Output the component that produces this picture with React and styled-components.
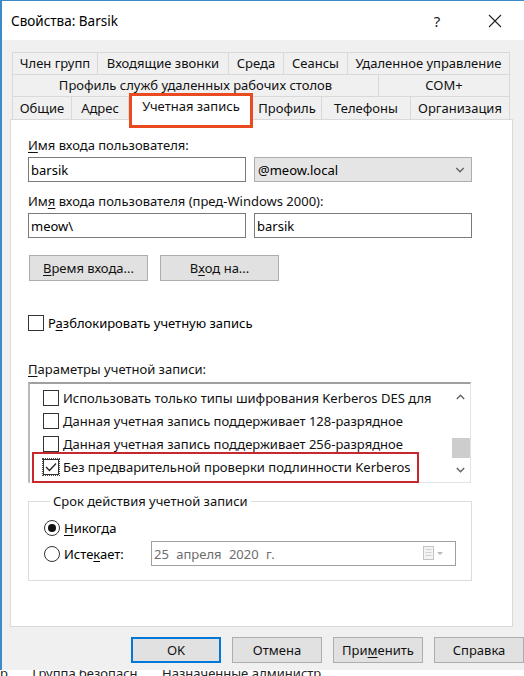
import React from "react";
import styled, { createGlobalStyle } from "styled-components";

const GlobalStyle = createGlobalStyle`
  html, body {
    margin: 0;
    padding: 0;
    background: #fff;
  }
  body {
    font-family: "Noto Sans", "Open Sans", sans-serif;
    font-size: 13px;
    color: #000;
  }
  u {
    text-underline-offset: 2px;
  }
`;

const Window = styled.div`
  width: 524px;
  height: 670px;
  box-sizing: border-box;
  background: #f0f0f0;
  border-left: 2px solid #3d8ac6;
  border-top: 1px solid #3d8ac6;
  display: flex;
  flex-direction: column;
`;

const TitleBar = styled.div`
  height: 39px;
  background: #fff;
  display: flex;
  align-items: center;
  padding-left: 9px;
`;

const Title = styled.div`
  flex: 1;
  font-size: 13.5px;
`;

const CaptionButton = styled.div`
  width: 58px;
  height: 39px;
  display: flex;
  align-items: center;
  justify-content: center;
  font-size: 15px;
  color: #222;
`;

const Body = styled.div`
  padding: 12px 0 0 8px;
`;

const Tabs = styled.div`
  margin: 0 2px;
  width: 498px;
  position: relative;
  z-index: 1;
`;

const TabRow = styled.div`
  display: flex;
  align-items: flex-end;
  height: ${(p) => p.$h}px;
`;

const Tab = styled.div`
  box-sizing: border-box;
  flex: 0 0 ${(p) => p.$w}px;
  height: ${(p) => (p.$active ? 26 : p.$h)}px;
  margin-bottom: ${(p) => (p.$active ? -1 : 0)}px;
  display: flex;
  align-items: center;
  justify-content: center;
  padding-bottom: ${(p) => (p.$active ? 4 : 1)}px;
  white-space: nowrap;
  background: ${(p) => (p.$active ? "#fff" : "#f0f0f0")};
  border-top: 1px solid #d9d9d9;
  border-right: 1px solid #d9d9d9;
  border-left: ${(p) => (p.$first || p.$active ? "1px solid #d9d9d9" : "none")};
  color: #111;
  position: relative;
  z-index: ${(p) => (p.$active ? 2 : 0)};

  ${(p) =>
    p.$active &&
    `
    &::after {
      content: "";
      position: absolute;
      left: -1px;
      right: -1px;
      top: -2px;
      bottom: -8px;
      border: 3px solid #ea4a1f;
    }
  `}
`;

const Panel = styled.div`
  box-sizing: border-box;
  width: 503px;
  height: 508px;
  background: #fff;
  border: 1px solid #d9d9d9;
  padding: 17px 0 0 17px;
`;

const Label = styled.div`
  line-height: 16px;
  height: 16px;
  margin-top: ${(p) => p.$mt || 0}px;
  color: #111;
  white-space: nowrap;
`;

const FieldRow = styled.div`
  display: flex;
  gap: 8px;
  margin-top: 4px;
`;

const TextBox = styled.div`
  box-sizing: border-box;
  width: 218px;
  height: 25px;
  border: 1px solid #7a7a7a;
  background: #fff;
  padding-left: 2px;
  display: flex;
  align-items: center;
`;

const Combo = styled.div`
  box-sizing: border-box;
  width: 218px;
  height: 25px;
  border: 1px solid #adadad;
  background: #e5e5e5;
  padding: 0 6px 0 3px;
  display: flex;
  align-items: center;
  justify-content: space-between;
`;

const ButtonRow = styled.div`
  display: flex;
  gap: ${(p) => p.$gap}px;
  margin-top: ${(p) => p.$mt}px;
  margin-left: ${(p) => p.$ml || 0}px;
  justify-content: ${(p) => p.$end ? "flex-end" : "flex-start"};
`;

const Button = styled.div`
  box-sizing: border-box;
  width: ${(p) => p.$w}px;
  height: 26px;
  background: #e1e1e1;
  border: ${(p) => (p.$default ? "2px solid #0078d7" : "1px solid #adadad")};
  display: flex;
  align-items: center;
  justify-content: center;
  color: #111;
`;

const CheckRow = styled.div`
  display: flex;
  align-items: center;
  gap: ${(p) => p.$gap || 4}px;
  height: 16px;
  margin-top: ${(p) => p.$mt || 0}px;
  white-space: nowrap;
`;

const Box = styled.div`
  box-sizing: border-box;
  width: 16px;
  height: 16px;
  flex: 0 0 16px;
  border: 1px solid #333;
  background: #fff;
  display: flex;
  align-items: center;
  justify-content: center;
  position: relative;

  ${(p) =>
    p.$focus &&
    `
    &::after {
      content: "";
      position: absolute;
      inset: -2px;
      border: 1px dotted #444;
    }
  `}
`;

const ListBox = styled.div`
  box-sizing: border-box;
  width: 443px;
  height: 101px;
  margin-top: 5px;
  border-top: 2px solid #a0a0a0;
  border-left: 2px solid #b9b9b9;
  border-right: 1px solid #e3e3e3;
  border-bottom: 1px solid #e3e3e3;
  display: flex;
  background: #fff;
`;

const ListItems = styled.div`
  flex: 1;
  padding-top: 2px;
  position: relative;
`;

const ListItem = styled.div`
  height: 23px;
  display: flex;
  align-items: center;
  gap: 4px;
  padding-left: 13px;
  white-space: nowrap;
  overflow: visible;
  position: relative;
  color: #111;

  ${(p) =>
    p.$marked &&
    `
    &::after {
      content: "";
      position: absolute;
      left: 2px;
      width: 383px;
      top: -3px;
      bottom: -5px;
      border: 2px solid #c7282e;
    }
  `}
`;

const ScrollBar = styled.div`
  width: 19px;
  display: flex;
  flex-direction: column;
  background: #fff;
`;

const ArrowCell = styled.div`
  height: ${(p) => p.$h}px;
  display: flex;
  align-items: ${(p) => (p.$up ? "center" : "flex-start")};
  justify-content: center;
  padding-top: ${(p) => p.$pt || 0}px;
  box-sizing: border-box;
`;

const Track = styled.div`
  flex: 1;
  position: relative;
`;

const Thumb = styled.div`
  margin-top: ${(p) => p.$top}px;
  margin-left: 1px;
  width: 18px;
  height: 20px;
  background: #cdcdcd;
`;

const GroupBox = styled.fieldset`
  box-sizing: border-box;
  width: 444px;
  margin: 10px 0 0 0;
  padding: 0 15px 14px 15px;
  border: 1px solid #dcdcdc;
  min-width: 0;
`;

const Legend = styled.legend`
  padding: 0 3px;
  margin-left: 6px;
  line-height: 16px;
  color: #111;
`;

const RadioRow = styled.div`
  display: flex;
  align-items: center;
  height: ${(p) => p.$h}px;
  margin-top: ${(p) => p.$mt}px;
  white-space: nowrap;
`;

const Radio = styled.div`
  box-sizing: border-box;
  width: 16px;
  height: 16px;
  border-radius: 50%;
  border: 1px solid #333;
  background: #fff;
  margin-right: 4px;
  display: flex;
  align-items: center;
  justify-content: center;

  &::after {
    content: "";
    width: 8px;
    height: 8px;
    border-radius: 50%;
    background: ${(p) => (p.$checked ? "#111" : "transparent")};
  }
`;

const DatePicker = styled.div`
  box-sizing: border-box;
  width: 305px;
  height: 25px;
  margin-left: auto;
  border: 1px solid #a0a0a0;
  background: #fff;
  display: flex;
  align-items: center;
  padding: 0 10px 0 2px;
  color: #6d6d6d;
`;

const DateText = styled.span`
  flex: 1;
  word-spacing: 4px;
`;

const Footer = styled.div`
  height: 6px;
  overflow: hidden;
  background: #fff;
`;

const FooterText = styled.div`
  margin-top: -5px;
  line-height: 16px;
  display: flex;
  gap: 14px;
  white-space: nowrap;
  color: #222;
  font-size: 13px;
`;

const Chevron = ({ up, color = "#606060", w = 9 }) => (
  <svg width={w} height="6" viewBox="0 0 9 6">
    <polyline
      points={up ? "0.8,5 4.5,1.2 8.2,5" : "0.8,1 4.5,4.8 8.2,1"}
      fill="none"
      stroke={color}
      strokeWidth="1.3"
    />
  </svg>
);

const CheckMark = () => (
  <svg width="12" height="10" viewBox="0 0 12 10">
    <polyline points="1,5 4.5,8.5 11,1.5" fill="none" stroke="#222" strokeWidth="1.3" />
  </svg>
);

const CalendarIcon = () => (
  <svg width="22" height="16" viewBox="0 0 22 16">
    <rect x="0.5" y="0.5" width="10" height="13" fill="#f4f4f4" stroke="#c4c4c4" />
    <rect x="2.5" y="3" width="6" height="1" fill="#d0d0d0" />
    <rect x="2.5" y="6" width="6" height="1" fill="#d0d0d0" />
    <rect x="2.5" y="9" width="6" height="1" fill="#d0d0d0" />
    <polygon points="14,6 20,6 17,9" fill="#b8b8b8" />
  </svg>
);

const tabRows = [
  {
    h: 22,
    tabs: [
      ["Член групп", 86],
      ["Входящие звонки", 131],
      ["Среда", 55],
      ["Сеансы", 64],
      ["Удаленное управление", 162],
    ],
  },
  {
    h: 22,
    tabs: [
      ["Профиль служб удаленных рабочих столов", 367],
      ["COM+", 131],
    ],
  },
  {
    h: 23,
    tabs: [
      ["Общие", 60],
      ["Адрес", 57],
      ["Учетная запись", 124, true],
      ["Профиль", 69],
      ["Телефоны", 89],
      ["Организация", 99],
    ],
  },
];

const options = [
  { text: "Использовать только типы шифрования Kerberos DES для" },
  { text: "Данная учетная запись поддерживает 128-разрядное" },
  { text: "Данная учетная запись поддерживает 256-разрядное" },
  { text: "Без предварительной проверки подлинности Kerberos", checked: true },
];

export default function App() {
  return (
    <>
      <GlobalStyle />
      <Window>
        <TitleBar>
          <Title>Свойства: Barsik</Title>
          <CaptionButton>?</CaptionButton>
          <CaptionButton>
            <svg width="14" height="14" viewBox="0 0 14 14">
              <path d="M1 1 L13 13 M13 1 L1 13" stroke="#222" strokeWidth="1.1" />
            </svg>
          </CaptionButton>
        </TitleBar>

        <Body>
          <Tabs>
            {tabRows.map((row, i) => (
              <TabRow key={i} $h={row.h}>
                {row.tabs.map(([name, w, active], j) => (
                  <Tab key={name} $w={w} $h={row.h} $active={active} $first={j === 0}>
                    {name}
                  </Tab>
                ))}
              </TabRow>
            ))}
          </Tabs>

          <Panel>
            <Label>
              <u>И</u>мя входа пользователя:
            </Label>
            <FieldRow>
              <TextBox>barsik</TextBox>
              <Combo>
                <span>@meow.local</span>
                <Chevron w={10} />
              </Combo>
            </FieldRow>

            <Label $mt={11}>
              Им<u>я</u> входа пользователя (пред-Windows 2000):
            </Label>
            <FieldRow>
              <TextBox>meow\</TextBox>
              <TextBox>barsik</TextBox>
            </FieldRow>

            <ButtonRow $gap={12} $mt={17} $ml={1}>
              <Button $w={119}>
                <u>В</u>ремя входа...
              </Button>
              <Button $w={119}>
                В<u>х</u>од на...
              </Button>
            </ButtonRow>

            <CheckRow $mt={34}>
              <Box />
              <span>
                Р<u>а</u>зблокировать учетную запись
              </span>
            </CheckRow>

            <Label $mt={30}>
              <u>П</u>араметры учетной записи:
            </Label>
            <ListBox>
              <ListItems>
                {options.map((o, i) => (
                  <ListItem key={i} $marked={o.checked}>
                    <Box $focus={o.checked}>{o.checked && <CheckMark />}</Box>
                    <span>{o.text}</span>
                  </ListItem>
                ))}
              </ListItems>
              <ScrollBar>
                <ArrowCell $h={26} $up>
                  <Chevron up />
                </ArrowCell>
                <Track>
                  <Thumb $top={28} />
                </Track>
                <ArrowCell $h={20} $pt={5}>
                  <Chevron />
                </ArrowCell>
              </ScrollBar>
            </ListBox>

            <GroupBox>
              <Legend>Срок действия учетной записи</Legend>
              <RadioRow $h={16} $mt={11}>
                <Radio $checked />
                <span>
                  <u>Н</u>икогда
                </span>
              </RadioRow>
              <RadioRow $h={25} $mt={5}>
                <Radio />
                <span>
                  Исте<u>к</u>ает:
                </span>
                <DatePicker>
                  <DateText>25 апреля 2020 г.</DateText>
                  <CalendarIcon />
                </DatePicker>
              </RadioRow>
            </GroupBox>
          </Panel>

          <ButtonRow $gap={11} $mt={10} $end>
            <Button $w={90} $default>
              OK
            </Button>
            <Button $w={90}>Отмена</Button>
            <Button $w={90}>
              При<u>м</u>енить
            </Button>
            <Button $w={90}>Справка</Button>
          </ButtonRow>
        </Body>
      </Window>
      <Footer>
        <FooterText>
          <span>р...</span>
          <span>Группа безопасн...</span>
          <span>Назначенные администр...</span>
        </FooterText>
      </Footer>
    </>
  );
}
